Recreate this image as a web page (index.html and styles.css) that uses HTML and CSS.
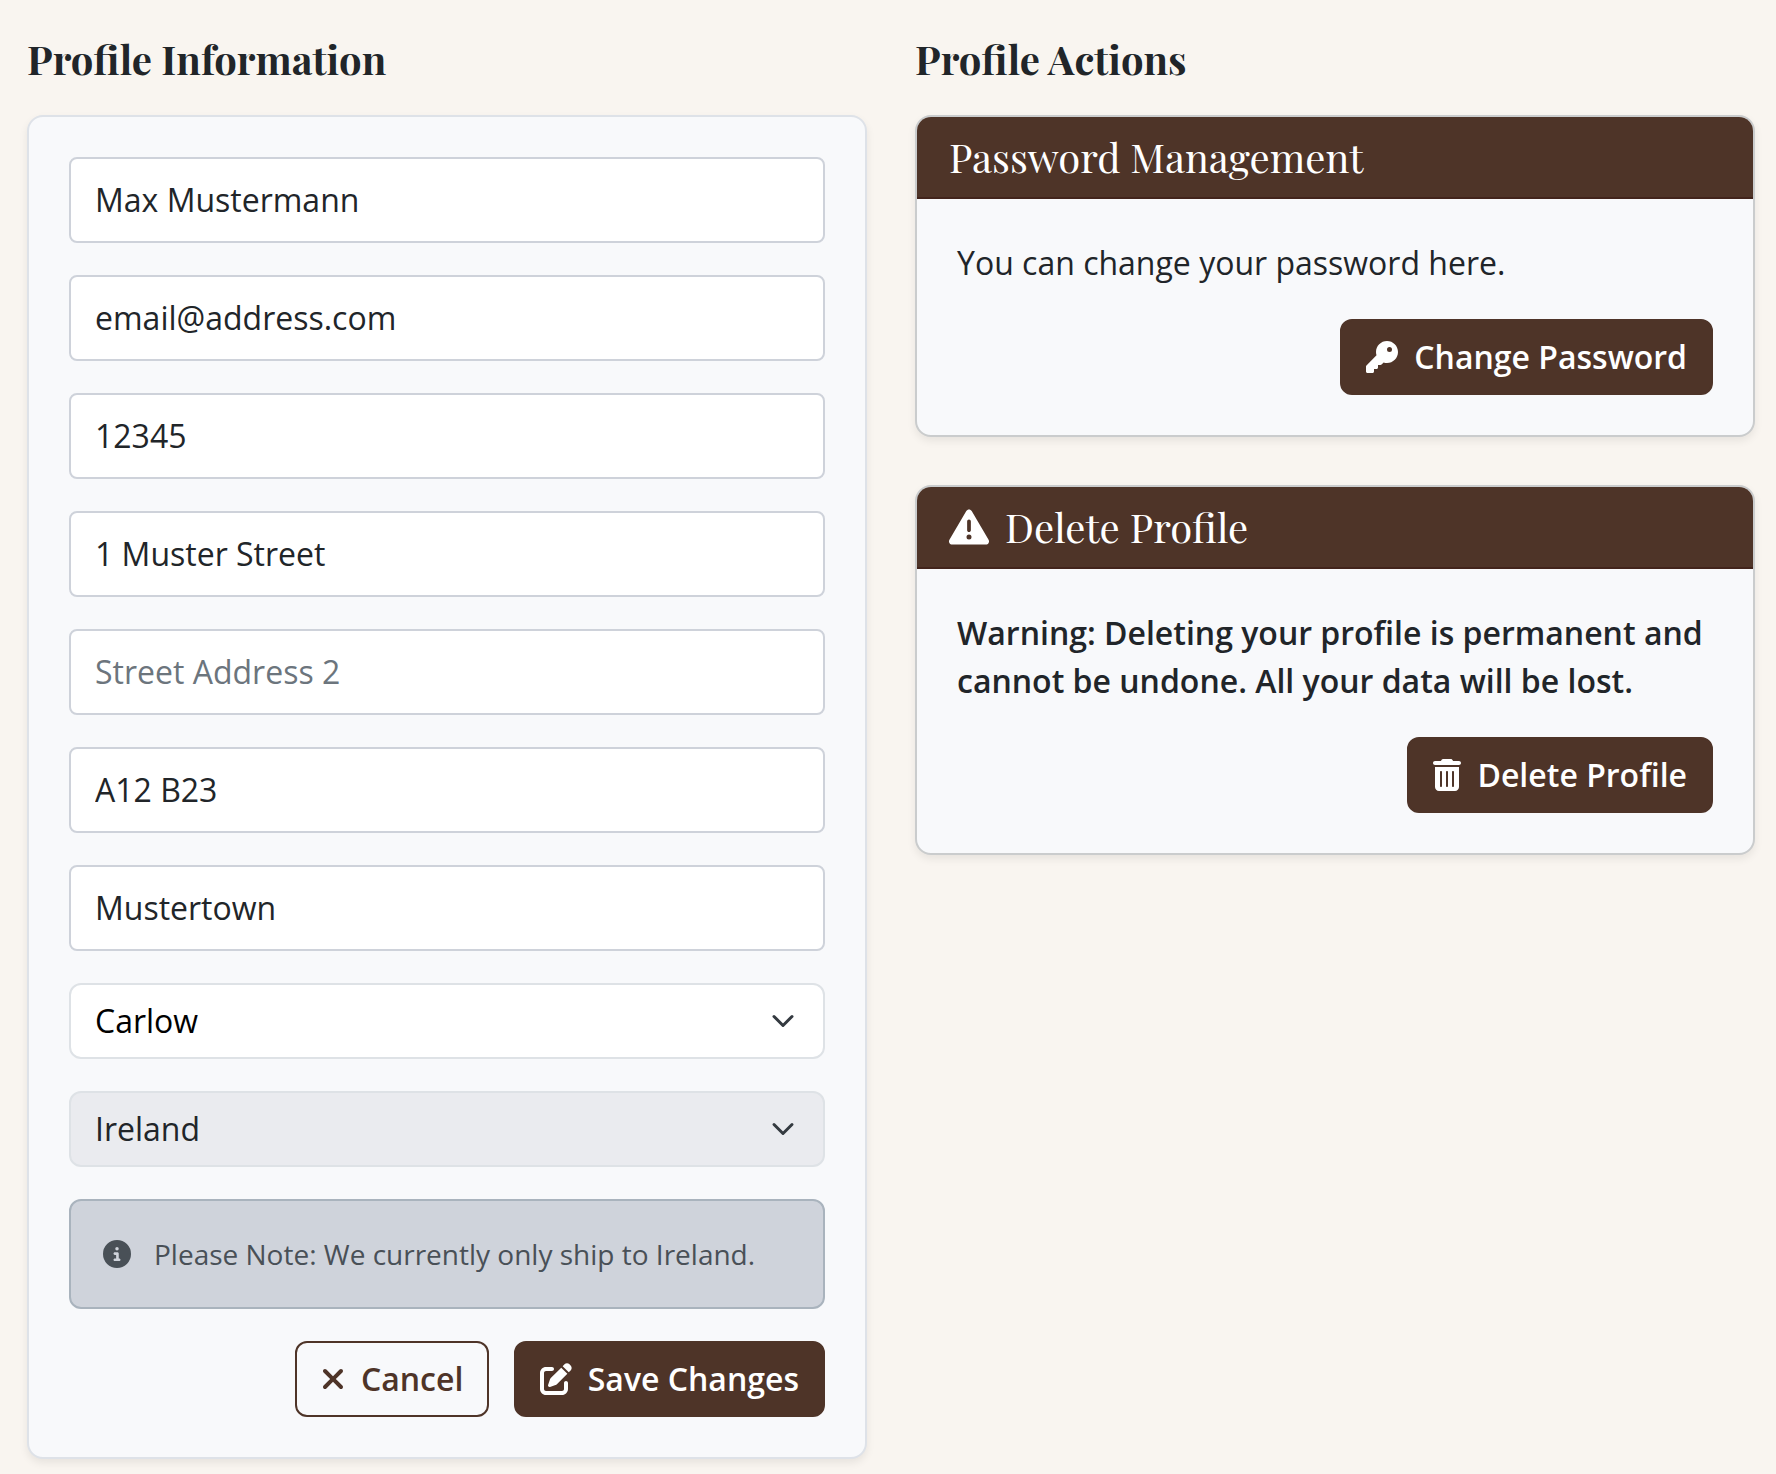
FILE: index.html
```html
<!DOCTYPE html>
<html lang="en">
<head>
<meta charset="utf-8">
<title>Profile</title>
<link rel="stylesheet" href="styles.css">
</head>
<body>
<main class="profile">
  <section class="column">
    <h2 class="title">Profile Information</h2>
    <form class="card form-card">
      <input class="field" type="text" value="Max Mustermann" aria-label="Full name">
      <input class="field" type="text" value="email@address.com" aria-label="Email">
      <input class="field" type="text" value="12345" aria-label="Phone number">
      <input class="field" type="text" value="1 Muster Street" aria-label="Street address 1">
      <input class="field" type="text" placeholder="Street Address 2" aria-label="Street address 2">
      <input class="field" type="text" value="A12 B23" aria-label="Postcode">
      <input class="field" type="text" value="Mustertown" aria-label="Town">
      <div class="select">
        <span>Carlow</span>
        <svg class="chevron" viewBox="0 0 16 16"><path d="m2 5 6 6 6-6"/></svg>
      </div>
      <div class="select select-disabled">
        <span>Ireland</span>
        <svg class="chevron" viewBox="0 0 16 16"><path d="m2 5 6 6 6-6"/></svg>
      </div>
      <div class="note">
        <svg class="icon icon-info" viewBox="0 0 512 512"><path d="M256 512A256 256 0 1 0 256 0a256 256 0 1 0 0 512zM216 336h24V272H216c-13.300 0-24-10.700-24-24s10.700-24 24-24h48c13.300 0 24 10.700 24 24v88h8c13.300 0 24 10.700 24 24s-10.700 24-24 24H216c-13.300 0-24-10.700-24-24s10.700-24 24-24zm40-208a32 32 0 1 1 0 64 32 32 0 1 1 0-64z"/></svg>
        <span>Please Note: We currently only ship to Ireland.</span>
      </div>
      <div class="buttons">
        <button class="btn btn-outline" type="button">
          <svg class="icon icon-x" viewBox="0 0 384 512"><path d="M342.600 150.600c12.500-12.500 12.500-32.800 0-45.300s-32.800-12.500-45.300 0L192 210.700 86.600 105.400c-12.500-12.500-32.800-12.500-45.300 0s-12.500 32.800 0 45.300L146.700 256 41.400 361.400c-12.500 12.500-12.500 32.800 0 45.300s32.800 12.500 45.300 0L192 301.300 297.400 406.600c12.500 12.500 32.800 12.500 45.300 0s12.500-32.800 0-45.300L237.300 256 342.600 150.600z"/></svg>
          <span>Cancel</span>
        </button>
        <button class="btn" type="button">
          <svg class="icon" viewBox="0 0 512 512"><path d="M471.600 21.700c-21.900-21.900-57.300-21.900-79.200 0L362.300 51.700l97.900 97.900 30.100-30.100c21.900-21.900 21.900-57.300 0-79.200L471.600 21.700zm-299.200 220c-6.100 6.100-10.800 13.600-13.500 21.900l-29.600 88.800c-2.900 8.600-.6 18.100 5.800 24.600s15.900 8.700 24.600 5.800l88.800-29.600c8.200-2.700 15.700-7.400 21.900-13.500L437.700 172.300 339.700 74.300 172.400 241.700zM96 64C43 64 0 107 0 160V416c0 53 43 96 96 96H352c53 0 96-43 96-96V320c0-17.700-14.300-32-32-32s-32 14.300-32 32v96c0 17.700-14.300 32-32 32H96c-17.700 0-32-14.300-32-32V160c0-17.700 14.300-32 32-32h96c17.700 0 32-14.300 32-32s-14.300-32-32-32H96z"/></svg>
          <span>Save Changes</span>
        </button>
      </div>
    </form>
  </section>

  <section class="column">
    <h2 class="title">Profile Actions</h2>
    <article class="card action-card">
      <h3 class="card-header"><span>Password Management</span></h3>
      <div class="card-body">
        <p class="text">You can change your password here.</p>
        <button class="btn" type="button">
          <svg class="icon" viewBox="0 0 512 512"><path d="M336 352c97.200 0 176-78.800 176-176S433.200 0 336 0S160 78.800 160 176c0 18.700 2.900 36.800 8.300 53.700L7 391c-4.500 4.500-7 10.600-7 17v80c0 13.300 10.700 24 24 24h80c13.300 0 24-10.700 24-24V448h40c13.300 0 24-10.700 24-24V384h40c6.400 0 12.500-2.500 17-7l33.300-33.300c16.900 5.400 35 8.300 53.700 8.300zM376 96a40 40 0 1 1 0 80 40 40 0 1 1 0-80z"/></svg>
          <span>Change Password</span>
        </button>
      </div>
    </article>
    <article class="card action-card">
      <h3 class="card-header">
        <svg class="icon icon-warning" viewBox="0 0 512 512"><path d="M256 32c14.200 0 27.300 7.500 34.500 19.800l216 368c7.300 12.400 7.300 27.700 .2 40.100S486.300 480 472 480H40c-14.300 0-27.600-7.700-34.700-20.100s-7-27.800 .2-40.100l216-368C228.700 39.500 241.800 32 256 32zm0 128c-13.300 0-24 10.700-24 24V296c0 13.300 10.700 24 24 24s24-10.700 24-24V184c0-13.300-10.700-24-24-24zm32 224a32 32 0 1 0 -64 0 32 32 0 1 0 64 0z"/></svg>
        <span>Delete Profile</span>
      </h3>
      <div class="card-body">
        <p class="text text-strong">Warning: Deleting your profile is permanent and cannot be undone. All your data will be lost.</p>
        <button class="btn" type="button">
          <svg class="icon icon-trash" viewBox="0 0 448 512"><path d="M135.200 17.700C140.600 6.800 151.700 0 163.800 0H284.200c12.100 0 23.200 6.800 28.600 17.700L320 32h96c17.700 0 32 14.300 32 32s-14.300 32-32 32H32C14.300 96 0 81.700 0 64S14.300 32 32 32h96l7.200-14.300zM32 128H416V448c0 35.300-28.700 64-64 64H96c-35.300 0-64-28.700-64-64V128zm96 64c-8.800 0-16 7.200-16 16V432c0 8.800 7.200 16 16 16s16-7.200 16-16V208c0-8.800-7.200-16-16-16zm96 0c-8.800 0-16 7.200-16 16V432c0 8.800 7.200 16 16 16s16-7.200 16-16V208c0-8.800-7.200-16-16-16zm96 0c-8.800 0-16 7.200-16 16V432c0 8.800 7.200 16 16 16s16-7.200 16-16V208c0-8.800-7.200-16-16-16z"/></svg>
          <span>Delete Profile</span>
        </button>
      </div>
    </article>
  </section>
</main>
</body>
</html>
```
FILE: styles.css
```css
* {
  box-sizing: border-box;
}

body {
  margin: 0;
  background: #f9f5f0;
  color: #212529;
  font: 400 32px/48px "Open Sans", "Noto Sans", sans-serif;
}

.profile {
  display: grid;
  grid-template-columns: 840px 840px;
  column-gap: 48px;
  align-items: start;
  height: 1474px;
  padding: 35px 21px 0 27px;
  overflow: hidden;
}

.column {
  display: flex;
  flex-direction: column;
  gap: 48px;
}

.title {
  height: 48px;
  margin: 0 0 -16px;
  font: 700 40px/48px "Playfair Display", "Liberation Serif", serif;
  white-space: nowrap;
}

.card {
  border: 2px solid #dee2e8;
  border-radius: 16px;
  background: #f8f9fb;
  box-shadow: 0 4px 8px rgba(0, 0, 0, 0.075);
}

.form-card {
  display: flex;
  flex-direction: column;
  gap: 32px;
  padding: 40px;
}

.field,
.select {
  display: flex;
  align-items: center;
  width: 100%;
  border: 2px solid #ced2da;
  background: #fff;
  color: #212529;
  font: inherit;
}

.field {
  height: 86px;
  padding: 0 24px 2px;
  border-radius: 8px;
}

.field::placeholder {
  color: #6c757d;
  opacity: 1;
}

.select {
  justify-content: space-between;
  height: 76px;
  padding: 0 28px 0 24px;
  border-color: #dee2e6;
  border-radius: 12px;
  color: #000;
}

.select-disabled {
  background: #eaebef;
  color: #212529;
}

.chevron {
  width: 24px;
  height: 24px;
  fill: none;
  stroke: #343a40;
  stroke-width: 2;
  stroke-linecap: round;
  stroke-linejoin: round;
}

.note {
  display: flex;
  align-items: center;
  gap: 23px;
  height: 110px;
  padding: 0 32px;
  border: 2px solid #a9b3bd;
  border-radius: 12px;
  background: #cfd3db;
  color: #495057;
  font-size: 28px;
  white-space: nowrap;
}

.icon {
  flex: none;
  width: 32px;
  height: 32px;
  fill: currentColor;
}

.icon-info {
  width: 28px;
  height: 28px;
}

.icon-x {
  width: 24px;
}

.icon-trash {
  width: 28px;
}

.icon-warning {
  width: 40px;
  height: 40px;
}

.buttons {
  display: flex;
  justify-content: flex-end;
  gap: 24.4px;
}

.btn {
  display: flex;
  align-items: center;
  gap: 16px;
  height: 76px;
  padding: 0 24px;
  border: 2px solid #4e3428;
  border-radius: 12px;
  background: #4e3428;
  color: #fff;
  font: inherit;
  font-weight: 600;
  white-space: nowrap;
}

.btn-outline {
  background: transparent;
  color: #4e3428;
}

.action-card {
  border-color: #cacccd;
  overflow: hidden;
}

.card-header {
  display: flex;
  align-items: center;
  gap: 16px;
  height: 82px;
  margin: 0;
  padding: 0 32px;
  border-bottom: 2px solid #42241c;
  background: #4e3428;
  color: #fff;
  font: 400 40px/48px "Playfair Display", "Liberation Serif", serif;
  white-space: nowrap;
}

.card-body {
  display: flex;
  flex-direction: column;
  align-items: flex-end;
  gap: 32px;
  padding: 40px;
}

.text {
  align-self: stretch;
  margin: 0;
}

.text-strong {
  font-weight: 600;
}
```
